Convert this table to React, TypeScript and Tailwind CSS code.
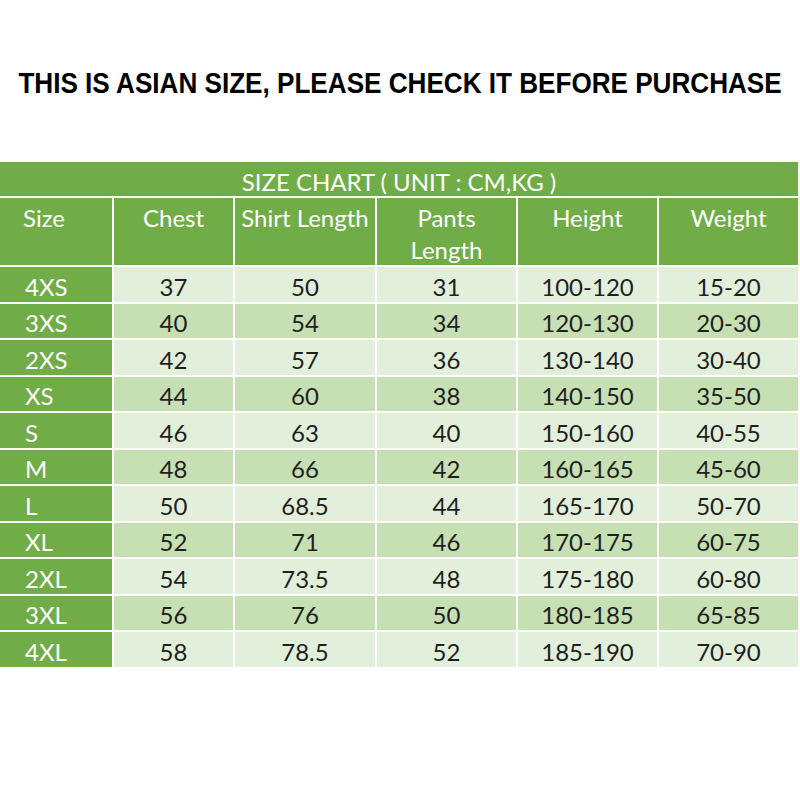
import React from 'react';

const ROWS = [
  ['4XS', '37', '50', '31', '100-120', '15-20'],
  ['3XS', '40', '54', '34', '120-130', '20-30'],
  ['2XS', '42', '57', '36', '130-140', '30-40'],
  ['XS', '44', '60', '38', '140-150', '35-50'],
  ['S', '46', '63', '40', '150-160', '40-55'],
  ['M', '48', '66', '42', '160-165', '45-60'],
  ['L', '50', '68.5', '44', '165-170', '50-70'],
  ['XL', '52', '71', '46', '170-175', '60-75'],
  ['2XL', '54', '73.5', '48', '175-180', '60-80'],
  ['3XL', '56', '76', '50', '180-185', '65-85'],
  ['4XL', '58', '78.5', '52', '185-190', '70-90'],
];

const HEADERS = ['Chest', 'Shirt Length', 'Pants Length', 'Height', 'Weight'];

const App: React.FC = () => {
  return (
    <div className="w-[800px] h-[800px] bg-white">
      {/* Banner */}
      <div className="h-[162px] pt-[65px] flex justify-center">
        <h1 className="whitespace-nowrap scale-x-[0.9] text-[29px] leading-[36px] font-bold text-black font-['Liberation_Sans',sans-serif]">
          THIS IS ASIAN SIZE, PLEASE CHECK IT BEFORE PURCHASE
        </h1>
      </div>

      {/* Size chart */}
      <div className="w-[798px] grid grid-cols-[112px_119px_140px_139px_139px_139px] gap-[2px] font-['Lato',sans-serif] text-[24px]">
        <div className="col-span-6 h-[34px] bg-[#70ad47] text-white flex items-center justify-center leading-none pt-[5px]">
          SIZE CHART ( UNIT : CM,KG )
        </div>

        <div className="h-[67px] bg-[#70ad47] text-white pl-[23px] pt-[4px] leading-[32px]">Size</div>
        {HEADERS.map(h => (
          <div key={h} className="h-[67px] bg-[#70ad47] text-white text-center pt-[4px] leading-[32px] px-1">
            {h}
          </div>
        ))}

        {ROWS.map((row, i) => {
          const bg = i % 2 === 0 ? 'bg-[#e2efda]' : 'bg-[#c6e0b4]';
          return (
            <React.Fragment key={row[0]}>
              <div className="h-[34.5px] bg-[#70ad47] text-white pl-[25px] pt-[5px] flex items-center">{row[0]}</div>
              {row.slice(1).map((v, j) => (
                <div key={j} className={`h-[34.5px] ${bg} text-[#1f1f1f] pt-[5px] flex items-center justify-center`}>
                  {v}
                </div>
              ))}
            </React.Fragment>
          );
        })}
      </div>
    </div>
  );
};

export default App;
